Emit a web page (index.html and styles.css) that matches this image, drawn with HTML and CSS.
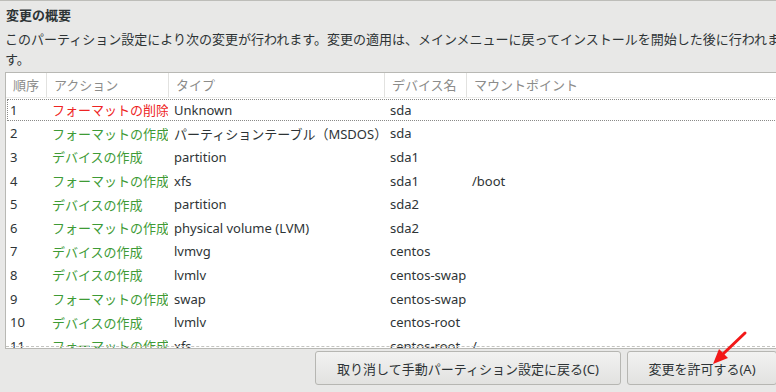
FILE: index.html
```html
<!DOCTYPE html>
<html lang="ja">
<head>
    <meta charset="UTF-8">
    <meta name="viewport" content="width=device-width, initial-scale=1.0">
    <title>変更の概要</title>
    <link rel="stylesheet" href="styles.css">
</head>
<body>
    <div class="dialog">
        <h1 class="title">変更の概要</h1>
        <p class="desc">このパーティション設定により次の変更が行われます。変更の適用は、メインメニューに戻ってインストールを開始した後に行われます。</p>

        <div class="list">
            <div class="row head">
                <div class="cell">順序</div>
                <div class="cell">アクション</div>
                <div class="cell">タイプ</div>
                <div class="cell">デバイス名</div>
                <div class="cell">マウントポイント</div>
            </div>
            <div class="row focus">
                <div class="cell num">1</div>
                <div class="cell del">フォーマットの削除</div>
                <div class="cell">Unknown</div>
                <div class="cell">sda</div>
                <div class="cell"></div>
            </div>
            <div class="row">
                <div class="cell num">2</div>
                <div class="cell add">フォーマットの作成</div>
                <div class="cell">パーティションテーブル（MSDOS）</div>
                <div class="cell">sda</div>
                <div class="cell"></div>
            </div>
            <div class="row">
                <div class="cell num">3</div>
                <div class="cell add">デバイスの作成</div>
                <div class="cell">partition</div>
                <div class="cell">sda1</div>
                <div class="cell"></div>
            </div>
            <div class="row">
                <div class="cell num">4</div>
                <div class="cell add">フォーマットの作成</div>
                <div class="cell">xfs</div>
                <div class="cell">sda1</div>
                <div class="cell">/boot</div>
            </div>
            <div class="row">
                <div class="cell num">5</div>
                <div class="cell add">デバイスの作成</div>
                <div class="cell">partition</div>
                <div class="cell">sda2</div>
                <div class="cell"></div>
            </div>
            <div class="row">
                <div class="cell num">6</div>
                <div class="cell add">フォーマットの作成</div>
                <div class="cell">physical volume (LVM)</div>
                <div class="cell">sda2</div>
                <div class="cell"></div>
            </div>
            <div class="row">
                <div class="cell num">7</div>
                <div class="cell add">デバイスの作成</div>
                <div class="cell">lvmvg</div>
                <div class="cell">centos</div>
                <div class="cell"></div>
            </div>
            <div class="row">
                <div class="cell num">8</div>
                <div class="cell add">デバイスの作成</div>
                <div class="cell">lvmlv</div>
                <div class="cell">centos-swap</div>
                <div class="cell"></div>
            </div>
            <div class="row">
                <div class="cell num">9</div>
                <div class="cell add">フォーマットの作成</div>
                <div class="cell">swap</div>
                <div class="cell">centos-swap</div>
                <div class="cell"></div>
            </div>
            <div class="row">
                <div class="cell num">10</div>
                <div class="cell add">デバイスの作成</div>
                <div class="cell">lvmlv</div>
                <div class="cell">centos-root</div>
                <div class="cell"></div>
            </div>
            <div class="row">
                <div class="cell num">11</div>
                <div class="cell add">フォーマットの作成</div>
                <div class="cell">xfs</div>
                <div class="cell">centos-root</div>
                <div class="cell">/</div>
            </div>
        </div>

        <div class="actions">
            <button class="btn btn-cancel">取り消して手動パーティション設定に戻る(C)</button>
            <button class="btn btn-accept">変更を許可する(A)</button>
        </div>

        <svg class="arrow" width="50" height="50" viewBox="0 0 50 50">
            <line x1="40" y1="4" x2="18" y2="25" stroke="#f21818" stroke-width="3" stroke-linecap="round"/>
            <polygon points="8,35 14,20 23,29" fill="#f21818"/>
        </svg>
    </div>
</body>
</html>
```

FILE: styles.css
```css
body {
    margin: 0;
    overflow: hidden;
    background: #e8e8e7;
    border-top: 1px solid #bdbdb9;
    font-family: 'Noto Sans', 'Noto Sans CJK JP', sans-serif;
    color: #2e3436;
}
.dialog {
    position: relative;
    width: 800px;
    padding: 4px 0 0 5px;
}
.title {
    margin: 0 0 4px 1px;
    font-size: 13px;
    font-weight: bold;
    line-height: 20px;
}
.desc {
    width: 790px;
    margin: 0 0 3px;
    font-size: 13px;
    line-height: 20px;
}
.list {
    position: relative;
    width: 774px;
    height: 275px;
    border: 1px solid #b8b8b4;
    background: #fff;
    overflow: hidden;
}
.list::after {
    content: "";
    position: absolute;
    left: 0;
    right: 0;
    bottom: 1px;
    border-bottom: 1px dashed #c4c4c0;
}
.row {
    display: grid;
    grid-template-columns: 40px 122px 216px 82px 1fr;
    height: 23.6px;
    align-items: center;
    font-size: 13px;
    color: #2e3436;
}
.row.head {
    height: 24px;
    border-bottom: 1px solid #ececea;
    color: #8c8c8a;
}
.row.head .cell {
    height: 24px;
    line-height: 24px;
    padding-left: 7px;
    border-left: 1px solid #e2e2e0;
}
.row.head .cell:first-child {
    border-left: none;
}
.row.focus {
    outline: 1px dotted #8a8a88;
    outline-offset: -2px;
}
.cell {
    padding-left: 6px;
    white-space: nowrap;
    overflow: hidden;
}
.cell.num {
    padding-left: 4px;
}
.del {
    color: #ee2424;
}
.add {
    color: #3e9b36;
}
.actions {
    display: flex;
    justify-content: flex-end;
    gap: 6px;
    width: 772px;
    margin-top: 2px;
}
.btn {
    height: 34px;
    border: 1px solid #b6b6b2;
    border-radius: 3px;
    background: linear-gradient(#f2f2f1, #e2e2e0);
    font-family: 'Noto Sans', 'Noto Sans CJK JP', sans-serif;
    font-size: 13px;
    color: #2e3436;
}
.btn-cancel {
    width: 306px;
}
.btn-accept {
    width: 150px;
}
.arrow {
    position: absolute;
    left: 705px;
    top: 328px;
}
```
